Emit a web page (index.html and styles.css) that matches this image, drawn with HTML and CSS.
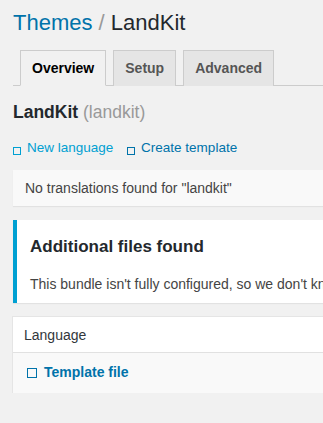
FILE: index.html
```html
<!DOCTYPE html>
<html lang="en">
<head>
    <meta charset="UTF-8">
    <meta name="viewport" content="width=device-width, initial-scale=1.0">
    <title>Themes / LandKit</title>
    <link rel="stylesheet" href="styles.css">
</head>
<body>
    <div class="wrap">
        <h1 class="title"><a href="#">Themes</a> <span class="sep">/</span> LandKit</h1>

        <nav class="tabs">
            <a href="#" class="tab active">Overview</a>
            <a href="#" class="tab">Setup</a>
            <a href="#" class="tab">Advanced</a>
        </nav>

        <h2 class="bundle">LandKit <span class="slug">(landkit)</span></h2>

        <p class="actions">
            <a href="#" class="action new"><span class="box"></span>New language</a>
            <a href="#" class="action"><span class="box"></span>Create template</a>
        </p>

        <div class="panel empty">
            <p>No translations found for "landkit"</p>
        </div>

        <div class="notice">
            <h3>Additional files found</h3>
            <p>This bundle isn't fully configured, so we don't know which files belong to it.</p>
        </div>

        <table class="files">
            <thead>
                <tr><th>Language</th></tr>
            </thead>
            <tbody>
                <tr><td><a href="#" class="file"><span class="box"></span>Template file</a></td></tr>
            </tbody>
        </table>
    </div>
</body>
</html>
```

FILE: styles.css
```css
html {
    overflow: hidden;
}

body {
    font-family: "Liberation Sans", Arial, sans-serif;
    font-size: 14px;
    background-color: #f1f1f1;
    color: #444;
    margin: 0;
}

a {
    text-decoration: none;
    color: #0073aa;
}

.wrap {
    width: 700px;
    padding-left: 13px;
}

.title {
    font-size: 22px;
    font-weight: normal;
    line-height: 29px;
    color: #23282d;
    margin: 0;
    padding: 8px 0 13px;
}

.title .sep {
    color: #999;
}

/* tabs */
.tabs {
    display: flex;
    border-bottom: 1px solid #ccc;
    padding-left: 7px;
}

.tab {
    font-size: 14px;
    font-weight: bold;
    line-height: 24px;
    padding: 5px 11px;
    margin-right: 7px;
    margin-bottom: -1px;
    border: 1px solid #ccc;
    border-bottom: none;
    background-color: #e5e5e5;
    color: #555;
}

.tab.active {
    background-color: #f1f1f1;
    color: #000;
    border-bottom: 1px solid #f1f1f1;
}

.bundle {
    font-size: 17.5px;
    line-height: 22px;
    color: #23282d;
    margin: 15px 0 0;
}

.slug {
    font-weight: normal;
    color: #999;
}

.actions {
    margin: 16px 0 0;
    font-size: 13.5px;
    line-height: 18px;
}

.action {
    margin-right: 10px;
}

.action.new {
    color: #00a0d2;
}

.box {
    display: inline-block;
    width: 6px;
    height: 6px;
    border: 1.5px solid currentColor;
    margin-right: 6px;
    vertical-align: -3px;
}

/* boxes */
.panel {
    background-color: #f9f9f9;
    box-shadow: 0 1px 1px rgba(0, 0, 0, 0.06);
    padding: 0 12px;
    margin-top: 13px;
}

.panel p {
    margin: 0;
    line-height: 18px;
    padding: 9px 0;
}

.notice {
    background-color: #fff;
    border-left: 4px solid #00a0d2;
    box-shadow: 0 1px 1px rgba(0, 0, 0, 0.06);
    padding: 1px 13px;
    margin-top: 14px;
}

.notice h3 {
    font-size: 17px;
    line-height: 22px;
    color: #23282d;
    margin: 15px 0 0;
}

.notice p {
    margin: 17px 0 9px;
    line-height: 18px;
}

.files {
    width: 100%;
    border-collapse: collapse;
    margin-top: 14px;
    box-shadow: 0 0 0 1px #e5e5e5;
}

.files th {
    text-align: left;
    font-weight: normal;
    font-size: 14px;
    color: #32373c;
    background-color: #fff;
    padding: 9px 11px 8px;
    line-height: 18px;
    border-bottom: 1px solid #e1e1e1;
}

.files td {
    background-color: #f9f9f9;
    padding: 10px 14px 12px;
    line-height: 18px;
}

.file {
    font-size: 14px;
    font-weight: bold;
}

.file .box {
    width: 8px;
    height: 8px;
    margin-right: 7px;
    vertical-align: -1px;
}
```
